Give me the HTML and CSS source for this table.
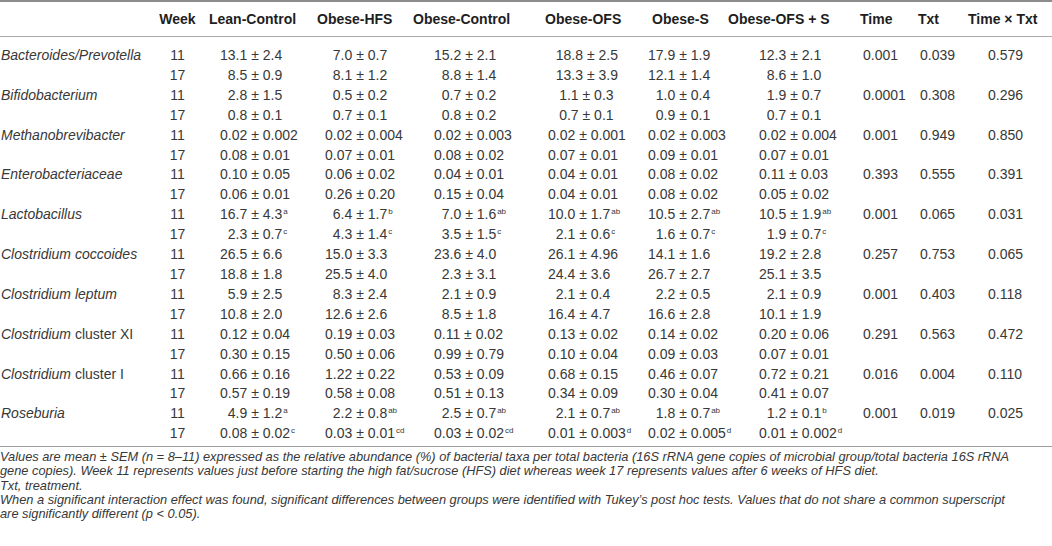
FILE: index.html
```html
<!DOCTYPE html>
<html lang="en">

<head>
    <meta charset="UTF-8">
    <meta name="viewport" content="width=device-width, initial-scale=1.0">
    <title>Bacterial taxa</title>
    <link rel="stylesheet" href="styles.css">
</head>

<body>
    <table class="data">
        <colgroup>
            <col class="c_taxon">
            <col class="c_week">
            <col class="c_lean">
            <col class="c_hfs">
            <col class="c_ctrl">
            <col class="c_ofs">
            <col class="c_s">
            <col class="c_ofss">
            <col class="c_time">
            <col class="c_txt">
            <col class="c_tt">
        </colgroup>
        <thead>
            <tr>
                <th></th>
                <th>Week</th>
                <th>Lean-Control</th>
                <th>Obese-HFS</th>
                <th>Obese-Control</th>
                <th>Obese-OFS</th>
                <th>Obese-S</th>
                <th>Obese-OFS + S</th>
                <th>Time</th>
                <th>Txt</th>
                <th>Time &times; Txt</th>
            </tr>
        </thead>
        <tbody>
            <tr>
                <td><i>Bacteroides/Prevotella</i></td>
                <td>11</td>
                <td>13.1 ± 2.4</td>
                <td class="i1">7.0 ± 0.7</td>
                <td>15.2 ± 2.1</td>
                <td class="i1">18.8 ± 2.5</td>
                <td>17.9 ± 1.9</td>
                <td>12.3 ± 2.1</td>
                <td>0.001</td>
                <td>0.039</td>
                <td>0.579</td>
            </tr>
            <tr>
                <td></td>
                <td>17</td>
                <td class="i1">8.5 ± 0.9</td>
                <td class="i1">8.1 ± 1.2</td>
                <td class="i1">8.8 ± 1.4</td>
                <td class="i1">13.3 ± 3.9</td>
                <td>12.1 ± 1.4</td>
                <td class="i1">8.6 ± 1.0</td>
                <td></td>
                <td></td>
                <td></td>
            </tr>
            <tr>
                <td><i>Bifidobacterium</i></td>
                <td>11</td>
                <td class="i1">2.8 ± 1.5</td>
                <td class="i1">0.5 ± 0.2</td>
                <td class="i1">0.7 ± 0.2</td>
                <td class="i2">1.1 ± 0.3</td>
                <td class="i1">1.0 ± 0.4</td>
                <td class="i1">1.9 ± 0.7</td>
                <td>0.0001</td>
                <td>0.308</td>
                <td>0.296</td>
            </tr>
            <tr>
                <td></td>
                <td>17</td>
                <td class="i1">0.8 ± 0.1</td>
                <td class="i1">0.7 ± 0.1</td>
                <td class="i1">0.8 ± 0.2</td>
                <td class="i2">0.7 ± 0.1</td>
                <td class="i1">0.9 ± 0.1</td>
                <td class="i1">0.7 ± 0.1</td>
                <td></td>
                <td></td>
                <td></td>
            </tr>
            <tr>
                <td><i>Methanobrevibacter</i></td>
                <td>11</td>
                <td>0.02 ± 0.002</td>
                <td>0.02 ± 0.004</td>
                <td>0.02 ± 0.003</td>
                <td>0.02 ± 0.001</td>
                <td>0.02 ± 0.003</td>
                <td>0.02 ± 0.004</td>
                <td>0.001</td>
                <td>0.949</td>
                <td>0.850</td>
            </tr>
            <tr>
                <td></td>
                <td>17</td>
                <td>0.08 ± 0.01</td>
                <td>0.07 ± 0.01</td>
                <td>0.08 ± 0.02</td>
                <td>0.07 ± 0.01</td>
                <td>0.09 ± 0.01</td>
                <td>0.07 ± 0.01</td>
                <td></td>
                <td></td>
                <td></td>
            </tr>
            <tr>
                <td><i>Enterobacteriaceae</i></td>
                <td>11</td>
                <td>0.10 ± 0.05</td>
                <td>0.06 ± 0.02</td>
                <td>0.04 ± 0.01</td>
                <td>0.04 ± 0.01</td>
                <td>0.08 ± 0.02</td>
                <td>0.11 ± 0.03</td>
                <td>0.393</td>
                <td>0.555</td>
                <td>0.391</td>
            </tr>
            <tr>
                <td></td>
                <td>17</td>
                <td>0.06 ± 0.01</td>
                <td>0.26 ± 0.20</td>
                <td>0.15 ± 0.04</td>
                <td>0.04 ± 0.01</td>
                <td>0.08 ± 0.02</td>
                <td>0.05 ± 0.02</td>
                <td></td>
                <td></td>
                <td></td>
            </tr>
            <tr>
                <td><i>Lactobacillus</i></td>
                <td>11</td>
                <td>16.7 ± 4.3<sup>a</sup></td>
                <td class="i1">6.4 ± 1.7<sup>b</sup></td>
                <td class="i1">7.0 ± 1.6<sup>ab</sup></td>
                <td>10.0 ± 1.7<sup>ab</sup></td>
                <td>10.5 ± 2.7<sup>ab</sup></td>
                <td>10.5 ± 1.9<sup>ab</sup></td>
                <td>0.001</td>
                <td>0.065</td>
                <td>0.031</td>
            </tr>
            <tr>
                <td></td>
                <td>17</td>
                <td class="i1">2.3 ± 0.7<sup>c</sup></td>
                <td class="i1">4.3 ± 1.4<sup>c</sup></td>
                <td class="i1">3.5 ± 1.5<sup>c</sup></td>
                <td class="i1">2.1 ± 0.6<sup>c</sup></td>
                <td class="i1">1.6 ± 0.7<sup>c</sup></td>
                <td class="i1">1.9 ± 0.7<sup>c</sup></td>
                <td></td>
                <td></td>
                <td></td>
            </tr>
            <tr>
                <td><i>Clostridium coccoides</i></td>
                <td>11</td>
                <td>26.5 ± 6.6</td>
                <td>15.0 ± 3.3</td>
                <td>23.6 ± 4.0</td>
                <td>26.1 ± 4.96</td>
                <td>14.1 ± 1.6</td>
                <td>19.2 ± 2.8</td>
                <td>0.257</td>
                <td>0.753</td>
                <td>0.065</td>
            </tr>
            <tr>
                <td></td>
                <td>17</td>
                <td>18.8 ± 1.8</td>
                <td>25.5 ± 4.0</td>
                <td class="i1">2.3 ± 3.1</td>
                <td>24.4 ± 3.6</td>
                <td>26.7 ± 2.7</td>
                <td>25.1 ± 3.5</td>
                <td></td>
                <td></td>
                <td></td>
            </tr>
            <tr>
                <td><i>Clostridium leptum</i></td>
                <td>11</td>
                <td class="i1">5.9 ± 2.5</td>
                <td class="i1">8.3 ± 2.4</td>
                <td class="i1">2.1 ± 0.9</td>
                <td class="i1">2.1 ± 0.4</td>
                <td class="i1">2.2 ± 0.5</td>
                <td class="i1">2.1 ± 0.9</td>
                <td>0.001</td>
                <td>0.403</td>
                <td>0.118</td>
            </tr>
            <tr>
                <td></td>
                <td>17</td>
                <td>10.8 ± 2.0</td>
                <td>12.6 ± 2.6</td>
                <td class="i1">8.5 ± 1.8</td>
                <td>16.4 ± 4.7</td>
                <td>16.6 ± 2.8</td>
                <td>10.1 ± 1.9</td>
                <td></td>
                <td></td>
                <td></td>
            </tr>
            <tr>
                <td><i>Clostridium</i> cluster XI</td>
                <td>11</td>
                <td>0.12 ± 0.04</td>
                <td>0.19 ± 0.03</td>
                <td>0.11 ± 0.02</td>
                <td>0.13 ± 0.02</td>
                <td>0.14 ± 0.02</td>
                <td>0.20 ± 0.06</td>
                <td>0.291</td>
                <td>0.563</td>
                <td>0.472</td>
            </tr>
            <tr>
                <td></td>
                <td>17</td>
                <td>0.30 ± 0.15</td>
                <td>0.50 ± 0.06</td>
                <td>0.99 ± 0.79</td>
                <td>0.10 ± 0.04</td>
                <td>0.09 ± 0.03</td>
                <td>0.07 ± 0.01</td>
                <td></td>
                <td></td>
                <td></td>
            </tr>
            <tr>
                <td><i>Clostridium</i> cluster I</td>
                <td>11</td>
                <td>0.66 ± 0.16</td>
                <td>1.22 ± 0.22</td>
                <td>0.53 ± 0.09</td>
                <td>0.68 ± 0.15</td>
                <td>0.46 ± 0.07</td>
                <td>0.72 ± 0.21</td>
                <td>0.016</td>
                <td>0.004</td>
                <td>0.110</td>
            </tr>
            <tr>
                <td></td>
                <td>17</td>
                <td>0.57 ± 0.19</td>
                <td>0.58 ± 0.08</td>
                <td>0.51 ± 0.13</td>
                <td>0.34 ± 0.09</td>
                <td>0.30 ± 0.04</td>
                <td>0.41 ± 0.07</td>
                <td></td>
                <td></td>
                <td></td>
            </tr>
            <tr>
                <td><i>Roseburia</i></td>
                <td>11</td>
                <td class="i1">4.9 ± 1.2<sup>a</sup></td>
                <td class="i1">2.2 ± 0.8<sup>ab</sup></td>
                <td class="i1">2.5 ± 0.7<sup>ab</sup></td>
                <td class="i1">2.1 ± 0.7<sup>ab</sup></td>
                <td class="i1">1.8 ± 0.7<sup>ab</sup></td>
                <td class="i1">1.2 ± 0.1<sup>b</sup></td>
                <td>0.001</td>
                <td>0.019</td>
                <td>0.025</td>
            </tr>
            <tr>
                <td></td>
                <td>17</td>
                <td>0.08 ± 0.02<sup>c</sup></td>
                <td>0.03 ± 0.01<sup>cd</sup></td>
                <td>0.03 ± 0.02<sup>cd</sup></td>
                <td>0.01 ± 0.003<sup>d</sup></td>
                <td>0.02 ± 0.005<sup>d</sup></td>
                <td>0.01 ± 0.002<sup>d</sup></td>
                <td></td>
                <td></td>
                <td></td>
            </tr>
        </tbody>
    </table>
    <div class="notes">
        <p>Values are mean ± SEM (n = 8–11) expressed as the relative abundance (%) of bacterial taxa per total bacteria (16S rRNA gene copies of microbial group/total bacteria 16S rRNA gene copies). Week 11 represents values just before starting the high fat/sucrose (HFS) diet whereas week 17 represents values after 6 weeks of HFS diet.</p>
        <p>Txt, treatment.</p>
        <p>When a significant interaction effect was found, significant differences between groups were identified with Tukey’s post hoc tests. Values that do not share a common superscript are significantly different (p &lt; 0.05).</p>
    </div>
</body>

</html>
```

FILE: styles.css
```css
* {
    margin: 0;
    padding: 0;
}

body {
    background-color: #fff;
    color: #383838;
    font-family: "Liberation Sans", Arial, sans-serif;
}

.data {
    width: 1052px;
    table-layout: fixed;
    border-collapse: collapse;
    border-top: 2px solid #8c8c8c;
    border-bottom: 1px solid #9c9c9c;
    font-size: 14px;
}

.c_taxon { width: 150px; }
.c_week { width: 55px; }
.c_lean { width: 110px; }
.c_hfs { width: 95px; }
.c_ctrl { width: 130px; }
.c_ofs { width: 106px; }
.c_s { width: 76px; }
.c_ofss { width: 133px; }
.c_time { width: 57px; }
.c_txt { width: 50px; }
.c_tt { width: 90px; }

.data th {
    height: 34px;
    line-height: 34px;
    font-weight: bold;
    color: #1e1e1e;
    text-align: left;
    white-space: nowrap;
    border-bottom: 1px solid #a8a8a8;
}

.data td {
    line-height: 19.9px;
    white-space: nowrap;
    vertical-align: bottom;
}

/* little gap under the header rule and above the bottom rule */
.data tbody tr:first-child td {
    padding-top: 9px;
}

.data tbody tr:last-child td {
    padding-bottom: 2px;
}

.data td:first-child {
    padding-left: 1px;
}

.data th:nth-child(2),
.data td:nth-child(2) {
    text-align: center;
}

/* header starts */
.data th:nth-child(3) { padding-left: 4px; }
.data th:nth-child(4) { padding-left: 2px; }
.data th:nth-child(5) { padding-left: 3px; }
.data th:nth-child(6) { padding-left: 5px; }
.data th:nth-child(7) { padding-left: 6px; }
.data th:nth-child(8) { padding-left: 6px; }
.data th:nth-child(9) { padding-left: 5px; }
.data th:nth-child(10) { padding-left: 6px; }
.data th:nth-child(11) { padding-left: 6px; }

/* value starts */
.data td:nth-child(3) { padding-left: 15px; }
.data td:nth-child(4) { padding-left: 10px; }
.data td:nth-child(5) { padding-left: 24px; }
.data td:nth-child(6) { padding-left: 8px; }
.data td:nth-child(7) { padding-left: 2px; }
.data td:nth-child(8) { padding-left: 37px; }
.data td:nth-child(9) { padding-left: 8px; }
.data td:nth-child(10) { padding-left: 8px; }
.data td:nth-child(11) { padding-left: 26px; }

/* one-digit values sit one figure to the right */
.data td.i1 {
    text-indent: 0.556em;
}

.data td.i2 {
    text-indent: 0.8em;
}

.data sup {
    font-size: 8px;
    line-height: 0;
    vertical-align: 5px;
    margin-left: 1px;
}

.notes {
    width: 1024px;
    margin-top: 3px;
    font-size: 12.8px;
    font-style: italic;
    line-height: 14.3px;
}
```
